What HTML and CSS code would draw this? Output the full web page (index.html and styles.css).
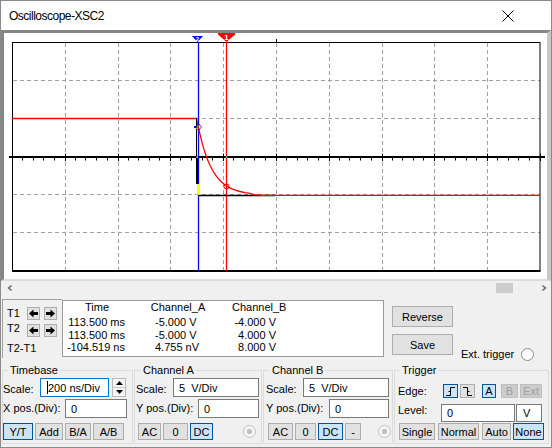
FILE: index.html
```html
<!DOCTYPE html>
<html>
<head>
<meta charset="utf-8">
<title>Oscilloscope-XSC2</title>
<link rel="stylesheet" href="styles.css">
</head>
<body>
<div class="window">
  <div class="titlebar">
    <span class="title">Oscilloscope-XSC2</span>
    <svg class="close" width="12" height="12" viewBox="0 0 12 12"><path d="M0.5 0.5L11.5 11.5M11.5 0.5L0.5 11.5" stroke="#000" stroke-width="1" fill="none"/></svg>
  </div>

  <div class="screen">
    <svg class="scope" width="543" height="246" viewBox="4 33 543 246">
      <rect x="4" y="33" width="543" height="246" fill="#fff"/>
      <g stroke="#a0a0a0" stroke-width="1" stroke-dasharray="4 3" fill="none">
        <path d="M65.5 43V271M118.5 43V271M170.5 43V271M223.5 43V271M276.5 43V271M329.5 43V271M382.5 43V271M434.5 43V271M487.5 43V271"/>
        <path d="M13 80.5H540M13 118.5H540M13 194.5H540M13 232.5H540"/>
      </g>
      <rect x="12.5" y="42.5" width="527.5" height="228" fill="none" stroke="#000" stroke-width="1"/>
      <path d="M12 271H540.5" stroke="#000" stroke-width="2"/>
      <path d="M9 157H545" stroke="#000" stroke-width="2"/>
      <path stroke="#000" stroke-width="1" d="M22.5 158V160.5M33.5 158V160.5M43.5 158V160.5M54.5 158V160.5M75.5 158V160.5M85.5 158V160.5M96.5 158V160.5M107.5 158V160.5M128.5 158V160.5M138.5 158V160.5M149.5 158V160.5M159.5 158V160.5M180.5 158V160.5M191.5 158V160.5M202.5 158V160.5M212.5 158V160.5M233.5 158V160.5M244.5 158V160.5M254.5 158V160.5M265.5 158V160.5M286.5 158V160.5M297.5 158V160.5M307.5 158V160.5M318.5 158V160.5M339.5 158V160.5M349.5 158V160.5M360.5 158V160.5M371.5 158V160.5M392.5 158V160.5M402.5 158V160.5M413.5 158V160.5M423.5 158V160.5M444.5 158V160.5M455.5 158V160.5M466.5 158V160.5M476.5 158V160.5M497.5 158V160.5M508.5 158V160.5M518.5 158V160.5M529.5 158V160.5"/>
      <path stroke="#000" stroke-width="1" d="M65.5 153.5V161M118.5 153.5V161M170.5 153.5V161M223.5 153.5V161M276.5 153.5V161M329.5 153.5V161M382.5 153.5V161M434.5 153.5V161M487.5 153.5V161M540.5 153.5V161"/>
      <path d="M276.5 39V43" stroke="#000"/>

      <path d="M198.5 42V271" stroke="#0000ff" stroke-width="1.3"/>
      <path d="M226.5 42V271" stroke="#ff0000" stroke-width="1.3"/>

      <path d="M198 195.5H275" stroke="#000" stroke-width="1.3"/>
      <polyline fill="none" stroke="#ff0000" stroke-width="1.3" points="12,118.5 196.5,118.5 198,125 200,134.3 202,142.4 204,149.4 206,155.5 208,160.7 210,165.3 212,169.2 214,172.7 216,175.6 218,178.2 220,180.5 223,183.3 226,185.5 229,187.4 232,188.8 236,190.4 240,191.5 245,192.6 250,193.3 254,194.6 262,195.3 540,195.3"/>
      <path d="M196.5 118V184" stroke="#000" stroke-width="1"/>
      <path d="M197.5 157V184" stroke="#000" stroke-width="1"/>
      <path d="M198.5 184V195" stroke="#ffff00" stroke-width="1.5"/>

      <rect x="194" y="126" width="2" height="2" fill="#0000ff"/>
      <path d="M198.5 123.5L201.5 127L198.5 130.5L195.5 127Z" fill="none" stroke="#0000ff" stroke-width="0.8"/>
      <rect x="196.5" y="126" width="2" height="2" fill="#00c000"/>
      <rect x="195" y="128" width="1.5" height="1.5" fill="#ffff00"/>
      <circle cx="226.5" cy="186.5" r="2.5" fill="none" stroke="#ff0000" stroke-width="1"/>
      <rect x="196.5" y="156.5" width="1.5" height="1.5" fill="#ffff00"/>
      <rect x="225.8" y="156.3" width="1.5" height="1.5" fill="#00ffff"/>

      <polygon points="192,36 203,36 197.5,42" fill="#0000ff"/>
      <text x="197.5" y="40.6" font-family="Liberation Sans, sans-serif" font-size="6" font-weight="bold" fill="#fff" text-anchor="middle">2</text>
      <polygon points="218,33 235,33 235,34.5 226.5,42 218,34.5" fill="#ff0000"/>
      <text x="226.5" y="40" font-family="Liberation Sans, sans-serif" font-size="8" font-weight="bold" fill="#fff" text-anchor="middle">1</text>
    </svg>
  </div>

  <div class="scrollbar">
    <svg width="6" height="10" viewBox="0 0 6 10"><polyline points="4.5,2.5 1.5,5 4.5,7.5" fill="none" stroke="#606060" stroke-width="1.4"/></svg>
    <div class="thumb"></div>
    <svg width="6" height="10" viewBox="0 0 6 10"><polyline points="1.5,2.5 4.5,5 1.5,7.5" fill="none" stroke="#606060" stroke-width="1.4"/></svg>
  </div>

  <div class="measure">
    <div class="tbox">
      <div class="trow">
        <span class="tlabel">T1</span>
        <div class="abtn"><svg width="11" height="11" viewBox="0 0 11 11"><path d="M1 5.5L5.5 1.5V4H10V7H5.5V9.5Z" fill="#000"/></svg></div>
        <div class="abtn"><svg width="11" height="11" viewBox="0 0 11 11"><path d="M10 5.5L5.5 1.5V4H1V7H5.5V9.5Z" fill="#000"/></svg></div>
      </div>
      <div class="trow trow2">
        <span class="tlabel t2">T2</span>
        <div class="abtn"><svg width="11" height="11" viewBox="0 0 11 11"><path d="M1 5.5L5.5 1.5V4H10V7H5.5V9.5Z" fill="#000"/></svg></div>
        <div class="abtn"><svg width="11" height="11" viewBox="0 0 11 11"><path d="M10 5.5L5.5 1.5V4H1V7H5.5V9.5Z" fill="#000"/></svg></div>
      </div>
      <div class="tdiff">T2-T1</div>
    </div>

    <div class="readout">
      <div class="rhead">
        <span class="h1">Time</span>
        <span class="h2">Channel_A</span>
        <span class="h3">Channel_B</span>
      </div>
      <div class="rrow"><span class="c1">113.500 ms</span><span class="c2">-5.000 V</span><span class="c3">-4.000 V</span></div>
      <div class="rrow"><span class="c1">113.500 ms</span><span class="c2">-5.000 V</span><span class="c3">4.000 V</span></div>
      <div class="rrow"><span class="c1">-104.519 ns</span><span class="c2">4.755 nV</span><span class="c3">8.000 V</span></div>
    </div>

    <div class="mbtns">
      <div class="btn mbtn">Reverse</div>
      <div class="btn mbtn">Save</div>
    </div>

    <div class="ext">
      <span>Ext. trigger</span>
      <span class="radio"></span>
    </div>
  </div>

  <div class="controls">
    <fieldset class="group g-tb">
      <legend>Timebase</legend>
      <div class="row r1">
        <span class="lbl w37">Scale:</span>
        <div class="field focus w69"><span class="caret"></span>200 ns/Div</div>
        <div class="spin">
          <div class="spin-half"><svg width="7" height="4" viewBox="0 0 7 4"><path d="M0 4L3.5 0L7 4Z" fill="#000"/></svg></div>
          <div class="spin-half"><svg width="7" height="4" viewBox="0 0 7 4"><path d="M0 0L3.5 4L7 0Z" fill="#000"/></svg></div>
        </div>
      </div>
      <div class="row r2">
        <span class="lbl w62">X pos.(Div):</span>
        <div class="field w62">0</div>
      </div>
      <div class="row r3 tb-btns">
        <div class="btn sel w30">Y/T</div>
        <div class="btn w28">Add</div>
        <div class="btn w26">B/A</div>
        <div class="btn w31">A/B</div>
      </div>
    </fieldset>

    <fieldset class="group g-ca">
      <legend>Channel A</legend>
      <div class="row r1">
        <span class="lbl w37">Scale:</span>
        <div class="field w86">5  V/Div</div>
      </div>
      <div class="row r2">
        <span class="lbl w62">Y pos.(Div):</span>
        <div class="field w61">0</div>
      </div>
      <div class="row r3 ca-btns">
        <div class="btn w23">AC</div>
        <div class="btn w25">0</div>
        <div class="btn sel w23">DC</div>
        <span class="radio dis ca-radio"></span>
      </div>
    </fieldset>

    <fieldset class="group g-cb">
      <legend>Channel B</legend>
      <div class="row r1">
        <span class="lbl w37">Scale:</span>
        <div class="field w86">5  V/Div</div>
      </div>
      <div class="row r2">
        <span class="lbl w63">Y pos.(Div):</span>
        <div class="field w60">0</div>
      </div>
      <div class="row r3 cb-btns">
        <div class="btn w25">AC</div>
        <div class="btn w21">0</div>
        <div class="btn sel w25">DC</div>
        <div class="btn w16">-</div>
        <span class="radio dis cb-radio"></span>
      </div>
    </fieldset>

    <fieldset class="group g-tr">
      <legend>Trigger</legend>
      <div class="row edge-row">
        <span class="lbl w45">Edge:</span>
        <div class="btn sel w15"><svg width="9" height="9" viewBox="0 0 9 9"><path d="M0 8.5H4.5V0.5H9M2.5 4.5H4.5" fill="none" stroke="#000" stroke-width="1"/></svg></div>
        <div class="btn w15 ml2"><svg width="9" height="9" viewBox="0 0 9 9"><path d="M0 0.5H4.5V8.5H9M4.5 4.5H6.5" fill="none" stroke="#000" stroke-width="1"/></svg></div>
        <div class="btn sel w14 ml7">A</div>
        <div class="btn dis w17 ml5">B</div>
        <div class="btn dis w22 ml2">Ext</div>
      </div>
      <div class="row level-row">
        <span class="lbl w43">Level:</span>
        <div class="field w74">0</div>
        <div class="field unit w26">V</div>
      </div>
      <div class="row r3 tr-btns">
        <div class="btn w36">Single</div>
        <div class="btn w41 ml3">Normal</div>
        <div class="btn w29 ml3">Auto</div>
        <div class="btn sel w31 ml2">None</div>
      </div>
    </fieldset>
  </div>
</div>
</body>
</html>
```

FILE: styles.css
```css
* { box-sizing: border-box; }
html, body { margin: 0; padding: 0; }
body {
  width: 552px;
  height: 448px;
  overflow: hidden;
  background: #f0f0f0;
  font-family: "Liberation Sans", Arial, sans-serif;
  font-size: 11px;
  color: #000;
}
.window {
  width: 552px;
  height: 448px;
  border: 1px solid #8a8a8a;
  display: flex;
  flex-direction: column;
  background: #f0f0f0;
}
.titlebar {
  height: 29px;
  flex: none;
  background: #fff;
  display: flex;
  align-items: center;
  justify-content: space-between;
  padding: 1px 37px 0 8px;
}
.title {
  font-size: 12px;
  letter-spacing: -0.5px;
  color: #000;
}
.close { display: block; }

.screen {
  flex: none;
  height: 251px;
  border-style: solid;
  border-width: 3px 4px 2px 3px;
  border-color: #858585 #c8c8c8 #dcdcdc #858585;
  background: #fff;
}
.scope { display: block; }

.scrollbar {
  flex: none;
  height: 10px;
  margin-top: 2px;
  display: flex;
  align-items: center;
  padding: 0 4px 0 6px;
}
.scrollbar svg { display: block; }
.thumb {
  align-self: stretch;
  width: 17px;
  margin-left: auto;
  margin-right: 28px;
  background: #cdcdcd;
}

.measure {
  flex: none;
  height: 59px;
  margin-top: 6px;
  padding-left: 1px;
  display: flex;
}
.tbox {
  width: 60px;
  height: 59px;
  border-top: 1px solid #a0a0a0;
  border-left: 1px solid #a0a0a0;
  padding: 7px 0 0 4px;
}
.trow {
  display: flex;
  align-items: center;
  height: 13px;
}
.trow2 { margin-top: 4px; align-items: flex-start; }
.tlabel { width: 20px; line-height: 13px; }
.t2 { margin-top: -2px; }
.abtn {
  width: 13px;
  height: 13px;
  background: #e1e1e1;
  border: 1px solid #adadad;
  display: flex;
  align-items: center;
  justify-content: center;
  margin-right: 4px;
}
.abtn svg { display: block; }
.tdiff { margin-top: 5px; line-height: 13px; }

.readout {
  width: 322px;
  height: 57px;
  margin-top: 1px;
  background: #fff;
  border: 1px solid #9a9a9a;
  padding-top: 0;
}
.rhead { display: flex; line-height: 13px; margin-bottom: 2px; }
.h1 { width: 68px; text-align: center; }
.h2 { width: 94px; text-align: center; }
.h3 { margin-left: 7px; }
.rrow { display: flex; line-height: 12.5px; height: 12.5px; }
.c1 { width: 62px; text-align: right; white-space: nowrap; }
.c2 { width: 90px; padding-left: 30px; white-space: nowrap; }
.c3 { width: 61px; text-align: right; white-space: nowrap; }

.btn {
  display: flex;
  align-items: center;
  justify-content: center;
  background: #e1e1e1;
  border: 1px solid #adadad;
  height: 100%;
  white-space: nowrap;
}
.btn svg { display: block; }
.btn.sel { background: #cce4f7; border-color: #005499; }
.btn.dis { color: #a0a0a0; background: #cccccc; border-color: #bfbfbf; }

.mbtns {
  margin-left: 8px;
  padding-top: 7px;
  width: 61px;
  display: flex;
  flex-direction: column;
  gap: 7px;
}
.mbtn { height: 21px; }

.ext {
  margin-left: 8px;
  align-self: flex-end;
  display: flex;
  align-items: center;
  line-height: 13px;
  margin-bottom: -3px;
}
.radio {
  display: inline-block;
  width: 13px;
  height: 13px;
  border-radius: 50%;
  border: 1px solid #8a8a8a;
  background: #fff;
  margin-left: 7px;
  flex: none;
}
.radio.dis {
  border-color: #c2c2c2;
  background: radial-gradient(circle, #c2c2c2 0 2.6px, #f6f6f6 3px);
}

.controls {
  flex: none;
  height: 80px;
  margin-top: 6px;
  display: flex;
}
.group {
  margin: 0 0 0 1px;
  padding: 1px 0 0 0;
  border: 1px solid #dcdcdc;
  height: 80px;
  min-width: 0;
}
.group legend {
  padding: 0 2px;
  margin-left: 5px;
  line-height: 13px;
  font-size: 11px;
}
.g-tb { width: 131px; }
.g-ca { width: 128px; padding-left: 1px; }
.g-ca legend { margin-left: 5px; }
.g-cb { width: 130px; padding-left: 2px; }
.g-cb legend { margin-left: 4px; }
.g-tr { width: 155px; padding-left: 3px; }
.g-tr legend { margin-left: 2px; }

.row { display: flex; align-items: center; }
.r1 { height: 19px; }
.r2 { height: 19px; margin-top: 2px; }
.r3 { height: 17px; margin-top: 5px; gap: 2px; }
.lbl { flex: none; white-space: nowrap; line-height: 13px; }
.r1 .lbl { margin-top: 3px; }

.field {
  height: 100%;
  background: #fff;
  border: 1px solid #7a7a7a;
  padding-left: 5px;
  display: flex;
  align-items: center;
  white-space: pre;
  flex: none;
}
.field.focus { border-color: #0078d7; padding-left: 6px; }
.caret {
  width: 1px;
  height: 13px;
  background: #000;
  margin-right: 0;
}
.spin {
  width: 14px;
  height: 19px;
  margin-left: 3px;
  border: 1px solid #b9b9b9;
  background: #f5f5f5;
  display: flex;
  flex-direction: column;
}
.spin-half {
  flex: 1;
  display: flex;
  align-items: center;
  justify-content: center;
}
.spin-half + .spin-half { border-top: 1px solid #c8c8c8; }
.spin svg { display: block; }

.ca-btns, .cb-btns { padding-left: 2px; }
.ca-radio { margin-left: 28px; }
.cb-radio { margin-left: 15px; }

.edge-row { height: 14px; margin-top: 6px; }
.level-row { height: 18px; margin-top: 6px; align-items: flex-start; }
.level-row .lbl { margin-top: 0; }
.unit { margin-left: 1px; padding-left: 6px; }
.tr-btns { margin-top: 1px; gap: 0; padding-left: 1px; }

.w14 { width: 14px; } .w15 { width: 15px; } .w16 { width: 16px; } .w17 { width: 17px; }
.w21 { width: 21px; } .w22 { width: 22px; } .w23 { width: 23px; } .w25 { width: 25px; }
.w26 { width: 26px; } .w28 { width: 28px; } .w29 { width: 29px; } .w30 { width: 30px; }
.w31 { width: 31px; } .w36 { width: 36px; } .w37 { width: 37px; } .w41 { width: 41px; }
.w43 { width: 43px; } .w45 { width: 45px; } .w60 { width: 60px; } .w61 { width: 61px; }
.w62 { width: 62px; } .w63 { width: 63px; } .w69 { width: 69px; } .w74 { width: 74px; }
.w86 { width: 86px; }
.ml2 { margin-left: 2px; } .ml3 { margin-left: 3px; } .ml5 { margin-left: 5px; } .ml7 { margin-left: 7px; }
```
